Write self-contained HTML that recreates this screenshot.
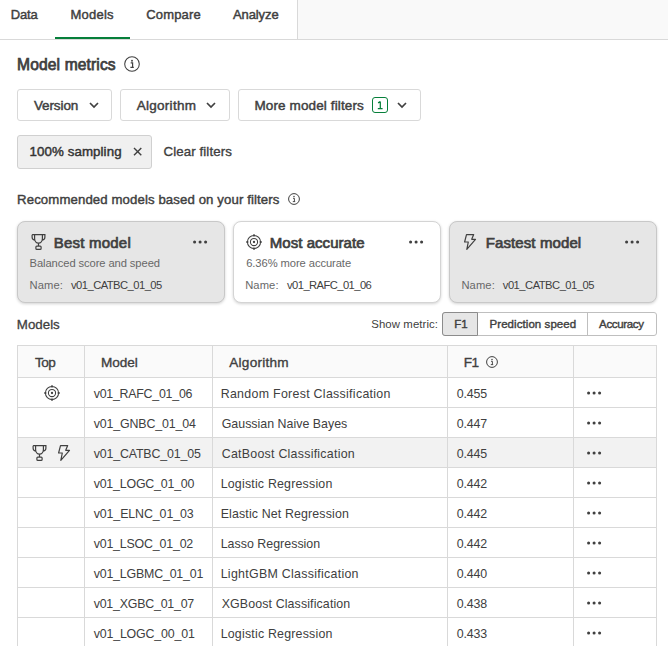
<!DOCTYPE html>
<html><head><meta charset="utf-8">
<style>
*{margin:0;padding:0;box-sizing:border-box}
html,body{width:668px;height:646px;overflow:hidden;background:#fff}
body{position:relative;font-family:"Liberation Sans",sans-serif;color:#404040}
.t{position:absolute;line-height:1;white-space:nowrap}
.sb{-webkit-text-stroke:0.45px currentColor}
.box{position:absolute}
svg{position:absolute;overflow:visible}
</style></head><body>
<div class="box" style="left:298px;top:0px;width:370px;height:39px;background:#f9f9f9"></div>
<div class="box" style="left:297px;top:0px;width:1px;height:39px;background:#d9d9d9"></div>
<div class="box" style="left:0px;top:39px;width:668px;height:1px;background:#d9d9d9"></div>
<div class="box" style="left:55px;top:37px;width:75px;height:2px;background:#067f3a"></div>
<div class="t" style="left:10.70px;top:8.00px;font-size:13.0px;letter-spacing:-0.133px;-webkit-text-stroke:0.45px currentColor">Data</div>
<div class="t" style="left:70.50px;top:8.00px;font-size:13.0px;letter-spacing:0.220px;-webkit-text-stroke:0.45px currentColor">Models</div>
<div class="t" style="left:146.20px;top:8.00px;font-size:13.0px;letter-spacing:0.167px;-webkit-text-stroke:0.45px currentColor">Compare</div>
<div class="t" style="left:232.90px;top:8.00px;font-size:13.0px;letter-spacing:-0.083px;-webkit-text-stroke:0.45px currentColor">Analyze</div>
<div class="t" style="left:17.10px;top:56.59px;font-size:15.6px;letter-spacing:0.125px;-webkit-text-stroke:0.75px currentColor">Model metrics</div>
<svg style="left:124px;top:56px" width="16" height="16" viewBox="0 0 16 16"><circle cx="8" cy="8" r="7.3" fill="none" stroke="#404040" stroke-width="1.05"/><circle cx="8" cy="4.7" r="0.95" fill="#404040"/><path d="M6.7 6.9h1.9v4.4M6.4 11.4h3.4" fill="none" stroke="#404040" stroke-width="1.2"/></svg>
<div class="box" style="left:17px;top:89px;width:95px;height:32px;border:1px solid #d9d9d9;border-radius:3px"></div>
<div class="t" style="left:33.90px;top:98.77px;font-size:13.5px;letter-spacing:-0.100px;-webkit-text-stroke:0.45px currentColor">Version</div>
<svg style="left:88.5px;top:102px" width="10" height="6" viewBox="0 0 10 6"><path d="M1 1l4 4 4-4" fill="none" stroke="#404040" stroke-width="1.7"/></svg>
<div class="box" style="left:120px;top:89px;width:110px;height:32px;border:1px solid #d9d9d9;border-radius:3px"></div>
<div class="t" style="left:136.80px;top:98.77px;font-size:13.5px;letter-spacing:0.262px;-webkit-text-stroke:0.45px currentColor">Algorithm</div>
<svg style="left:206px;top:102px" width="10" height="6" viewBox="0 0 10 6"><path d="M1 1l4 4 4-4" fill="none" stroke="#404040" stroke-width="1.7"/></svg>
<div class="box" style="left:238px;top:89px;width:183px;height:32px;border:1px solid #d9d9d9;border-radius:3px"></div>
<div class="t" style="left:254.40px;top:98.77px;font-size:13.5px;letter-spacing:0.129px;-webkit-text-stroke:0.45px currentColor">More model filters</div>
<div class="box" style="left:372px;top:97px;width:16px;height:16px;border:1px solid #067f3a;border-radius:3px"></div>
<svg style="left:372px;top:97px" width="16" height="16" viewBox="0 0 16 16"><path d="M8.3 4.6V11.4M8.3 4.6L6.1 5.9M5.8 11.5H10.6" fill="none" stroke="#067f3a" stroke-width="1.25"/></svg>
<svg style="left:397px;top:102px" width="10" height="6" viewBox="0 0 10 6"><path d="M1 1l4 4 4-4" fill="none" stroke="#404040" stroke-width="1.7"/></svg>
<div class="box" style="left:17px;top:135px;width:135px;height:34px;border:1px solid #d0d0d0;border-radius:3px;background:#f0f0f0"></div>
<div class="t" style="left:29.50px;top:145.24px;font-size:13.3px;letter-spacing:0.092px;color:#333;-webkit-text-stroke:0.45px currentColor">100% sampling</div>
<svg style="left:133px;top:147px" width="9" height="9" viewBox="0 0 9 9"><path d="M1 1l7.3 7.3M8.3 1l-7.3 7.3" fill="none" stroke="#404040" stroke-width="1.4"/></svg>
<div class="t" style="left:163.50px;top:145.24px;font-size:13.3px;letter-spacing:0.092px;-webkit-text-stroke:0.35px currentColor">Clear filters</div>
<div class="t" style="left:17.10px;top:193.03px;font-size:13.2px;letter-spacing:0.108px;-webkit-text-stroke:0.42px currentColor">Recommended models based on your filters</div>
<svg style="left:288px;top:193px" width="12" height="12" viewBox="0 0 12 12"><circle cx="6" cy="6" r="5.4" fill="none" stroke="#404040" stroke-width="1"/><circle cx="6" cy="3.6" r="0.75" fill="#404040"/><path d="M5 5.3h1.4v3.2M4.8 8.6h2.4" fill="none" stroke="#404040" stroke-width="0.95"/></svg>
<div class="box" style="left:17px;top:221px;width:208px;height:82px;background:#e6e6e6;border:1px solid #c8c8c8;border-radius:8px;box-shadow:0 1px 3px rgba(0,0,0,0.18)"></div>
<div class="box" style="left:233px;top:221px;width:208px;height:82px;background:#fff;border:1px solid #d4d4d4;border-radius:8px;box-shadow:0 1px 3px rgba(0,0,0,0.18)"></div>
<div class="box" style="left:449px;top:221px;width:208px;height:82px;background:#e6e6e6;border:1px solid #c8c8c8;border-radius:8px;box-shadow:0 1px 3px rgba(0,0,0,0.18)"></div>
<svg style="left:31px;top:234px" width="15" height="16" viewBox="0 0 15 16"><path d="M1.1 0.7H13.9V3.2C13.9 4.8 12.8 5.8 11.3 6.1M1.1 0.7V3.2C1.1 4.8 2.2 5.8 3.7 6.1M3.6 0.7V4.6C3.6 7 5.3 9.1 7.5 9.1C9.7 9.1 11.4 7 11.4 4.6V0.7M7.5 9.1V12" fill="none" stroke="#404040" stroke-width="1.2"/><rect x="4.9" y="12.1" width="5.2" height="3.3" rx="0.9" fill="none" stroke="#404040" stroke-width="1.2"/></svg>
<div class="t" style="left:53.80px;top:235.00px;font-size:15.0px;letter-spacing:0.211px;-webkit-text-stroke:0.7px currentColor">Best model</div>
<svg style="left:193px;top:240px" width="15" height="4" viewBox="0 0 15 4"><circle cx="1.6" cy="2" r="1.55" fill="#404040"/><circle cx="7.1" cy="2" r="1.55" fill="#404040"/><circle cx="12.6" cy="2" r="1.55" fill="#404040"/></svg>
<div class="t" style="left:29.60px;top:257.52px;font-size:11.2px;letter-spacing:-0.091px;color:#686868">Balanced score and speed</div>
<div class="t" style="left:29.60px;top:280.12px;font-size:11.2px;letter-spacing:0.100px;color:#686868">Name:</div>
<div class="t" style="left:71.00px;top:280.12px;font-size:11.2px;letter-spacing:-0.529px">v01_CATBC_01_05</div>
<svg style="left:246px;top:234px" width="16" height="16" viewBox="0 0 16 16"><circle cx="8" cy="8" r="6.6" fill="none" stroke="#404040" stroke-width="1.05"/><circle cx="8" cy="8" r="3.6" fill="none" stroke="#404040" stroke-width="1.05"/><circle cx="8" cy="8" r="1.15" fill="#404040"/><path d="M8 0.2v2.2M8 13.6v2.2M0.2 8h2.2M13.6 8h2.2" stroke="#404040" stroke-width="1.5"/></svg>
<div class="t" style="left:269.80px;top:235.00px;font-size:15.0px;letter-spacing:0.042px;-webkit-text-stroke:0.7px currentColor">Most accurate</div>
<svg style="left:409px;top:240px" width="15" height="4" viewBox="0 0 15 4"><circle cx="1.6" cy="2" r="1.55" fill="#404040"/><circle cx="7.1" cy="2" r="1.55" fill="#404040"/><circle cx="12.6" cy="2" r="1.55" fill="#404040"/></svg>
<div class="t" style="left:246.20px;top:257.52px;font-size:11.2px;letter-spacing:-0.078px;color:#686868">6.36% more accurate</div>
<div class="t" style="left:245.20px;top:280.12px;font-size:11.2px;letter-spacing:0.100px;color:#686868">Name:</div>
<div class="t" style="left:287.00px;top:280.12px;font-size:11.2px;letter-spacing:-0.554px">v01_RAFC_01_06</div>
<svg style="left:464px;top:234px" width="13" height="16" viewBox="0 0 13 16"><path d="M2.5 0.6H9.7L7.7 5.3H11.5L2.8 15.3L4.3 8H0.6Z" fill="none" stroke="#404040" stroke-width="1.2" stroke-linejoin="round"/></svg>
<div class="t" style="left:485.70px;top:235.00px;font-size:15.0px;letter-spacing:0.108px;-webkit-text-stroke:0.7px currentColor">Fastest model</div>
<svg style="left:625px;top:240px" width="15" height="4" viewBox="0 0 15 4"><circle cx="1.6" cy="2" r="1.55" fill="#404040"/><circle cx="7.1" cy="2" r="1.55" fill="#404040"/><circle cx="12.6" cy="2" r="1.55" fill="#404040"/></svg>
<div class="t" style="left:461.40px;top:280.12px;font-size:11.2px;letter-spacing:0.100px;color:#686868">Name:</div>
<div class="t" style="left:502.80px;top:280.12px;font-size:11.2px;letter-spacing:-0.500px">v01_CATBC_01_05</div>
<div class="t" style="left:16.80px;top:318.14px;font-size:13.3px;letter-spacing:0.020px;-webkit-text-stroke:0.3px currentColor">Models</div>
<div class="t" style="left:371.20px;top:318.55px;font-size:11.4px;letter-spacing:0.091px">Show metric:</div>
<div class="box" style="left:442px;top:312px;width:215px;height:24px;border:1px solid #bfbfbf;border-radius:3px"></div>
<div class="box" style="left:442px;top:312px;width:36px;height:24px;border:1px solid #8c8c8c;border-radius:3px 0 0 3px;background:#e6e6e6"></div>
<div class="box" style="left:587px;top:312px;width:1px;height:24px;background:#bfbfbf"></div>
<div class="t" style="left:454.30px;top:319.17px;font-size:11.5px;-webkit-text-stroke:0.4px currentColor">F1</div>
<div class="t" style="left:489.50px;top:319.17px;font-size:11.5px;letter-spacing:0.067px;-webkit-text-stroke:0.4px currentColor">Prediction speed</div>
<div class="t" style="left:599.10px;top:319.17px;font-size:11.5px;letter-spacing:-0.357px;-webkit-text-stroke:0.4px currentColor">Accuracy</div>
<div class="box" style="left:17px;top:345px;width:640px;height:32px;background:#fafafa"></div>
<div class="box" style="left:17px;top:438px;width:640px;height:29px;background:#f2f2f2"></div>
<div class="box" style="left:17px;top:345px;width:640px;height:1px;background:#d9d9d9"></div>
<div class="box" style="left:17px;top:345px;width:1px;height:301px;background:#d9d9d9"></div>
<div class="box" style="left:656px;top:345px;width:1px;height:301px;background:#d9d9d9"></div>
<div class="box" style="left:84px;top:345px;width:1px;height:301px;background:#d9d9d9"></div>
<div class="box" style="left:212px;top:345px;width:1px;height:301px;background:#d9d9d9"></div>
<div class="box" style="left:447px;top:345px;width:1px;height:301px;background:#d9d9d9"></div>
<div class="box" style="left:573px;top:345px;width:1px;height:301px;background:#d9d9d9"></div>
<div class="box" style="left:17px;top:377px;width:640px;height:1px;background:#d9d9d9"></div>
<div class="box" style="left:17px;top:407px;width:640px;height:1px;background:#d9d9d9"></div>
<div class="box" style="left:17px;top:437px;width:640px;height:1px;background:#d9d9d9"></div>
<div class="box" style="left:17px;top:467px;width:640px;height:1px;background:#d9d9d9"></div>
<div class="box" style="left:17px;top:497px;width:640px;height:1px;background:#d9d9d9"></div>
<div class="box" style="left:17px;top:527px;width:640px;height:1px;background:#d9d9d9"></div>
<div class="box" style="left:17px;top:557px;width:640px;height:1px;background:#d9d9d9"></div>
<div class="box" style="left:17px;top:587px;width:640px;height:1px;background:#d9d9d9"></div>
<div class="box" style="left:17px;top:617px;width:640px;height:1px;background:#d9d9d9"></div>
<div class="t" style="left:34.90px;top:356.09px;font-size:13.6px;letter-spacing:-0.500px;-webkit-text-stroke:0.35px currentColor">Top</div>
<div class="t" style="left:100.90px;top:356.09px;font-size:13.6px;letter-spacing:-0.025px;-webkit-text-stroke:0.35px currentColor">Model</div>
<div class="t" style="left:229.30px;top:356.09px;font-size:13.6px;letter-spacing:0.237px;-webkit-text-stroke:0.35px currentColor">Algorithm</div>
<div class="t" style="left:463.70px;top:356.09px;font-size:13.6px;letter-spacing:-0.6px;-webkit-text-stroke:0.35px currentColor">F1</div>
<svg style="left:486px;top:356px" width="12" height="12" viewBox="0 0 12 12"><circle cx="6" cy="6" r="5.4" fill="none" stroke="#404040" stroke-width="1"/><circle cx="6" cy="3.6" r="0.75" fill="#404040"/><path d="M5 5.3h1.4v3.2M4.8 8.6h2.4" fill="none" stroke="#404040" stroke-width="0.95"/></svg>
<svg style="left:44px;top:385px" width="16" height="16" viewBox="0 0 16 16"><circle cx="8" cy="8" r="6.6" fill="none" stroke="#404040" stroke-width="1.05"/><circle cx="8" cy="8" r="3.6" fill="none" stroke="#404040" stroke-width="1.05"/><circle cx="8" cy="8" r="1.15" fill="#404040"/><path d="M8 0.2v2.2M8 13.6v2.2M0.2 8h2.2M13.6 8h2.2" stroke="#404040" stroke-width="1.5"/></svg>
<div class="t" style="left:93.70px;top:388.10px;font-size:12.4px;letter-spacing:-0.246px">v01_RAFC_01_06</div>
<div class="t" style="left:220.70px;top:388.10px;font-size:12.4px;letter-spacing:0.293px">Random Forest Classification</div>
<div class="t" style="left:456.80px;top:388.10px;font-size:12.4px;letter-spacing:-0.150px">0.455</div>
<svg style="left:587px;top:391px" width="15" height="4" viewBox="0 0 15 4"><circle cx="1.6" cy="2" r="1.55" fill="#404040"/><circle cx="7.1" cy="2" r="1.55" fill="#404040"/><circle cx="12.6" cy="2" r="1.55" fill="#404040"/></svg>
<div class="t" style="left:93.70px;top:418.10px;font-size:12.4px;letter-spacing:-0.131px">v01_GNBC_01_04</div>
<div class="t" style="left:221.70px;top:418.10px;font-size:12.4px;letter-spacing:0.011px">Gaussian Naive Bayes</div>
<div class="t" style="left:456.80px;top:418.10px;font-size:12.4px;letter-spacing:-0.150px">0.447</div>
<svg style="left:587px;top:421px" width="15" height="4" viewBox="0 0 15 4"><circle cx="1.6" cy="2" r="1.55" fill="#404040"/><circle cx="7.1" cy="2" r="1.55" fill="#404040"/><circle cx="12.6" cy="2" r="1.55" fill="#404040"/></svg>
<svg style="left:31.5px;top:445px" width="15" height="16" viewBox="0 0 15 16"><path d="M1.1 0.7H13.9V3.2C13.9 4.8 12.8 5.8 11.3 6.1M1.1 0.7V3.2C1.1 4.8 2.2 5.8 3.7 6.1M3.6 0.7V4.6C3.6 7 5.3 9.1 7.5 9.1C9.7 9.1 11.4 7 11.4 4.6V0.7M7.5 9.1V12" fill="none" stroke="#404040" stroke-width="1.2"/><rect x="4.9" y="12.1" width="5.2" height="3.3" rx="0.9" fill="none" stroke="#404040" stroke-width="1.2"/></svg>
<svg style="left:58px;top:445px" width="13" height="16" viewBox="0 0 13 16"><path d="M2.5 0.6H9.7L7.7 5.3H11.5L2.8 15.3L4.3 8H0.6Z" fill="none" stroke="#404040" stroke-width="1.2" stroke-linejoin="round"/></svg>
<div class="t" style="left:93.70px;top:448.10px;font-size:12.4px;letter-spacing:-0.150px">v01_CATBC_01_05</div>
<div class="t" style="left:221.70px;top:448.10px;font-size:12.4px;letter-spacing:0.255px">CatBoost Classification</div>
<div class="t" style="left:456.80px;top:448.10px;font-size:12.4px;letter-spacing:-0.150px">0.445</div>
<svg style="left:587px;top:451px" width="15" height="4" viewBox="0 0 15 4"><circle cx="1.6" cy="2" r="1.55" fill="#404040"/><circle cx="7.1" cy="2" r="1.55" fill="#404040"/><circle cx="12.6" cy="2" r="1.55" fill="#404040"/></svg>
<div class="t" style="left:93.70px;top:478.10px;font-size:12.4px;letter-spacing:-0.200px">v01_LOGC_01_00</div>
<div class="t" style="left:220.70px;top:478.10px;font-size:12.4px;letter-spacing:0.194px">Logistic Regression</div>
<div class="t" style="left:456.80px;top:478.10px;font-size:12.4px;letter-spacing:-0.150px">0.442</div>
<svg style="left:587px;top:481px" width="15" height="4" viewBox="0 0 15 4"><circle cx="1.6" cy="2" r="1.55" fill="#404040"/><circle cx="7.1" cy="2" r="1.55" fill="#404040"/><circle cx="12.6" cy="2" r="1.55" fill="#404040"/></svg>
<div class="t" style="left:93.70px;top:508.10px;font-size:12.4px;letter-spacing:-0.100px">v01_ELNC_01_03</div>
<div class="t" style="left:220.70px;top:508.10px;font-size:12.4px;letter-spacing:0.133px">Elastic Net Regression</div>
<div class="t" style="left:456.80px;top:508.10px;font-size:12.4px;letter-spacing:-0.150px">0.442</div>
<svg style="left:587px;top:511px" width="15" height="4" viewBox="0 0 15 4"><circle cx="1.6" cy="2" r="1.55" fill="#404040"/><circle cx="7.1" cy="2" r="1.55" fill="#404040"/><circle cx="12.6" cy="2" r="1.55" fill="#404040"/></svg>
<div class="t" style="left:93.70px;top:538.10px;font-size:12.4px;letter-spacing:-0.185px">v01_LSOC_01_02</div>
<div class="t" style="left:220.70px;top:538.10px;font-size:12.4px;letter-spacing:0.020px">Lasso Regression</div>
<div class="t" style="left:456.80px;top:538.10px;font-size:12.4px;letter-spacing:-0.150px">0.442</div>
<svg style="left:587px;top:541px" width="15" height="4" viewBox="0 0 15 4"><circle cx="1.6" cy="2" r="1.55" fill="#404040"/><circle cx="7.1" cy="2" r="1.55" fill="#404040"/><circle cx="12.6" cy="2" r="1.55" fill="#404040"/></svg>
<div class="t" style="left:93.70px;top:568.10px;font-size:12.4px;letter-spacing:-0.186px">v01_LGBMC_01_01</div>
<div class="t" style="left:220.70px;top:568.10px;font-size:12.4px;letter-spacing:0.286px">LightGBM Classification</div>
<div class="t" style="left:456.80px;top:568.10px;font-size:12.4px;letter-spacing:-0.150px">0.440</div>
<svg style="left:587px;top:571px" width="15" height="4" viewBox="0 0 15 4"><circle cx="1.6" cy="2" r="1.55" fill="#404040"/><circle cx="7.1" cy="2" r="1.55" fill="#404040"/><circle cx="12.6" cy="2" r="1.55" fill="#404040"/></svg>
<div class="t" style="left:93.70px;top:598.10px;font-size:12.4px;letter-spacing:-0.215px">v01_XGBC_01_07</div>
<div class="t" style="left:221.70px;top:598.10px;font-size:12.4px;letter-spacing:0.119px">XGBoost Classification</div>
<div class="t" style="left:456.80px;top:598.10px;font-size:12.4px;letter-spacing:-0.150px">0.438</div>
<svg style="left:587px;top:601px" width="15" height="4" viewBox="0 0 15 4"><circle cx="1.6" cy="2" r="1.55" fill="#404040"/><circle cx="7.1" cy="2" r="1.55" fill="#404040"/><circle cx="12.6" cy="2" r="1.55" fill="#404040"/></svg>
<div class="t" style="left:93.70px;top:628.10px;font-size:12.4px;letter-spacing:-0.169px">v01_LOGC_00_01</div>
<div class="t" style="left:220.70px;top:628.10px;font-size:12.4px;letter-spacing:0.200px">Logistic Regression</div>
<div class="t" style="left:456.80px;top:628.10px;font-size:12.4px;letter-spacing:-0.150px">0.433</div>
<svg style="left:587px;top:631px" width="15" height="4" viewBox="0 0 15 4"><circle cx="1.6" cy="2" r="1.55" fill="#404040"/><circle cx="7.1" cy="2" r="1.55" fill="#404040"/><circle cx="12.6" cy="2" r="1.55" fill="#404040"/></svg>
</body></html>
